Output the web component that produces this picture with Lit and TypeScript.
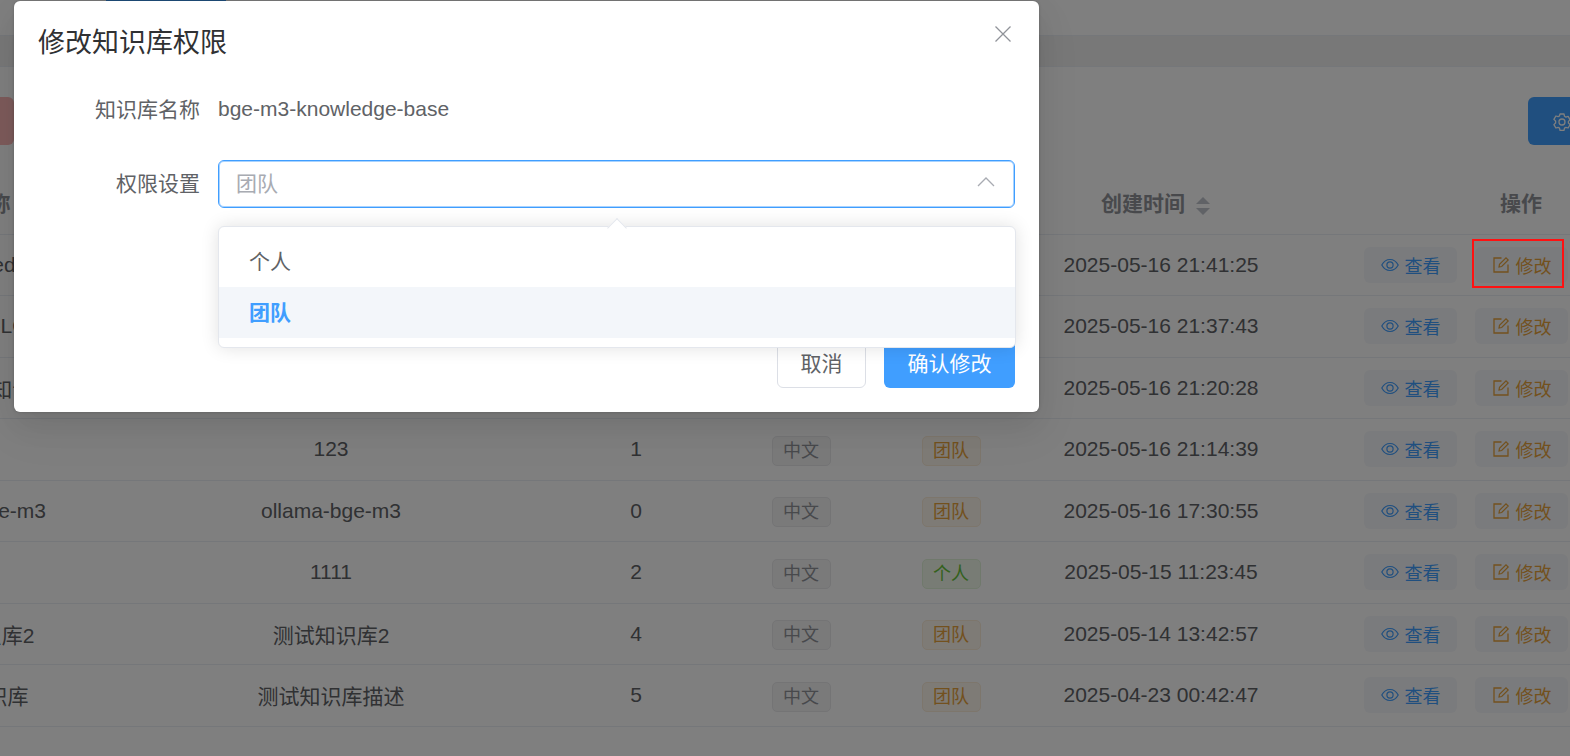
import { LitElement, html, css, svg } from "lit";
import { customElement } from "lit/decorators.js";

const rows = [
  { n: "bge-m3-knowledge-base", d: "", c: "", p: "", t: "2025-05-16 21:41:25" },
  { n: "Embeddings-LOCAL.", d: "", c: "", p: "", t: "2025-05-16 21:37:43" },
  { n: "产品说明书知识库2", d: "", c: "", p: "", t: "2025-05-16 21:20:28" },
  { n: "123", d: "123", c: "1", p: "团队", t: "2025-05-16 21:14:39" },
  { n: "ollama-bge-m3", d: "ollama-bge-m3", c: "0", p: "团队", t: "2025-05-16 17:30:55" },
  { n: "1111", d: "1111", c: "2", p: "个人", t: "2025-05-15 11:23:45" },
  { n: "测试知识库2", d: "测试知识库2", c: "4", p: "团队", t: "2025-05-14 13:42:57" },
  { n: "测试知识库", d: "测试知识库描述", c: "5", p: "团队", t: "2025-04-23 00:42:47" },
];

const eye = svg`<path d="M.8 9C2.800 5.300 5.700 3.500 9 3.500s6.200 1.800 8.200 5.500c-2 3.700-4.900 5.500-8.200 5.500S2.800 12.700.8 9z" fill="none" stroke="currentColor" stroke-width="1.200"/><circle cx="9" cy="9" r="3.100" fill="none" stroke="currentColor" stroke-width="1.200"/>`;
const edit = svg`<path d="M16 8.500V16H2V2h7.500" fill="none" stroke="currentColor" stroke-width="1.300"/><path d="M7 11l.5-2.700L14 1.800l2.200 2.200-6.500 6.500z" fill="none" stroke="currentColor" stroke-width="1.200"/>`;
const gear = svg`<path d="M7 1.200h4l.5 2.300 1.400.8 2.200-.7 2 3.400-1.700 1.600v1.600l1.700 1.600-2 3.400-2.200-.7-1.400.8-.5 2.300H7l-.5-2.300-1.400-.8-2.200.7-2-3.400 1.700-1.600V8.200L.900 6.600l2-3.400 2.200.7 1.400-.8z" transform="translate(0 -.2)" fill="none" stroke="currentColor" stroke-width="1.300" stroke-linejoin="round"/><circle cx="9" cy="9" r="3" fill="none" stroke="currentColor" stroke-width="1.300"/>`;

@customElement("app-root")
export class AppRoot extends LitElement {
  static styles = css`
    :host { display: block; width: 1570px; height: 756px; overflow: hidden; position: relative;
      font-family: "Liberation Sans", "Noto Sans CJK SC", sans-serif; background: #fff; color: #606266; }
    .top { height: 35px; border-bottom: 1px solid #ebeef5; position: relative; }
    .top i { display: block; position: absolute; left: 106px; top: 0; width: 120px; height: 2px; background: #409eff; }
    .band { height: 30px; background: #f0f0f0; border-bottom: 1px solid #ebeef5; }
    .bar { height: 114px; display: flex; justify-content: space-between; box-sizing: border-box; padding-top: 30px; }
    .del { width: 14px; height: 48px; background: #fab6b6; border-radius: 0 6px 6px 0; }
    .gear { width: 60px; height: 48px; margin-right: -18px; background: #409eff; border-radius: 6px 0 0 6px; color: #fff;
      box-sizing: border-box; padding: 16px 0 0 25px; }
    .gear svg { width: 18px; height: 18px; display: block; }
    .table { margin-left: -164px; width: 1910px; }
    .row { display: grid; grid-template-columns: 280px 430px 180px 150px 150px 270px 450px; height: 61.500px; border-bottom: 1px solid #ebeef5;
      box-sizing: border-box; font-size: 21px; align-items: center; color: #606266; }
    .head { height: 53.500px; padding-bottom: 10px; font-weight: 700; color: #909399; }
    .row > div { white-space: nowrap; }
    .c { text-align: center; }
    .sorter { display: inline-block; vertical-align: middle; width: 36px; box-sizing: border-box; padding-left: 11px; }
    .sorter b { display: block; width: 0; height: 0; border: 7px solid transparent; }
    .sorter b:first-child { border-top: 0; border-bottom: 7px solid #c0c4cc; margin-bottom: 4px; }
    .sorter b:last-child { border-bottom: 0; border-top: 7px solid #c0c4cc; }
    .tag { display: inline-block; box-sizing: border-box; height: 30px; line-height: 28px; padding: 0 10.500px; font-size: 18px; border-radius: 5px; border: 1px solid; }
    .cell-tag { padding-top: 3px; }
    .gray { color: #909399; background: #f4f4f5; border-color: #e9e9eb; }
    .orange { color: #e6a23c; background: #fdf6ec; border-color: #faecd8; }
    .green { color: #67c23a; background: #f0f9eb; border-color: #e1f3d8; }
    .ops { display: flex; gap: 18px; padding-left: 68px; }
    .op { display: inline-flex; align-items: center; gap: 6px; height: 36px; width: 93px; justify-content: center; box-sizing: border-box;
      font-size: 18px; border-radius: 6px; background: #f5f7fa; flex: none; }
    .op svg { width: 18px; height: 18px; }
    .blue { color: #409eff; }
    .warn { color: #e6a23c; }
    .mask { position: absolute; inset: 0; background: rgba(0,0,0,.5); }
    .mark { position: absolute; left: 1472px; top: 239px; width: 92px; height: 49px; border: 2px solid #f11; box-sizing: border-box; }
    .dialog { position: absolute; left: 14px; top: 1px; width: 1025px; height: 411px; background: #fff; border-radius: 6px; box-sizing: border-box;
      padding: 24px; box-shadow: 0 18px 48px 6px rgba(0,0,0,.04), 0 12px 30px rgba(0,0,0,.08), 0 0 3px rgba(0,0,0,.2); }
    .title { font-size: 27px; line-height: 36px; color: #303133; }
    .close { position: absolute; right: 27px; top: 24px; width: 18px; height: 18px; color: #909399; }
    .field { display: flex; align-items: center; font-size: 21px; }
    .lab { width: 162px; padding-right: 18px; text-align: right; color: #606266; }
    .val { padding-top: 2px; }
    .f1 { margin-top: 23px; height: 48px; }
    .f2 { margin-top: 28px; height: 48px; }
    .f2 .lab { padding-bottom: 4px; }
    .sel { width: 797px; height: 48px; box-sizing: border-box; border: 1px solid #409eff; box-shadow: inset 0 0 0 1px rgba(64,158,255,.45); border-radius: 6px;
      display: flex; align-items: center; justify-content: space-between; padding: 0 19px 4px 17px; color: #a8abb2; font-size: 21px; }
    .sel svg { width: 18px; height: 18px; display: block; }
    .foot { position: absolute; right: 24px; top: 338px; display: flex; gap: 18px; }
    .btn { height: 49px; box-sizing: border-box; border-radius: 6px; font-size: 21px; display: flex; align-items: center; justify-content: center; padding-bottom: 4px; }
    .cancel { width: 89px; border: 1px solid #dcdfe6; color: #606266; background: #fff; }
    .ok { width: 131px; background: #409eff; color: #fff; }
    .drop { position: absolute; left: 218px; top: 226px; width: 798px; height: 121.500px; background: #fff; border: 1px solid #e4e7ed; border-radius: 6px;
      box-sizing: border-box; padding-top: 10px; box-shadow: 0 0 18px rgba(0,0,0,.12); }
    .arrow { position: absolute; left: 391px; top: -6px; width: 14px; height: 14px; background: #fff; transform: rotate(45deg); border-left: 1px solid #e4e7ed; border-top: 1px solid #e4e7ed; box-sizing: border-box; }
    .opt { height: 50px; line-height: 50px; padding-left: 30px; font-size: 21px; color: #606266; position: relative; }
    .opt.on { background: #f3f6fa; color: #409eff; font-weight: 700; height: 51px; line-height: 52px; }
  `;

  render() {
    return html`
      <div class="top"><i></i></div>
      <div class="band"></div>
      <div class="bar"><div class="del"></div><div class="gear"><svg viewBox="0 0 18 18">${gear}</svg></div></div>
      <div class="table">
        <div class="row head">
          <div class="c">知识库名称<span class="sorter"><b></b><b></b></span></div><div class="c">描述</div><div class="c">文档数</div><div class="c">语言</div><div class="c">权限</div>
          <div class="c">创建时间<span class="sorter"><b></b><b></b></span></div>
          <div class="c">操作</div>
        </div>
        ${rows.map((r) => html`
          <div class="row">
            <div class="c">${r.n}</div>
            <div class="c">${r.d}</div>
            <div class="c">${r.c}</div>
            <div class="c cell-tag">${r.p ? html`<span class="tag gray">中文</span>` : ""}</div>
            <div class="c cell-tag">${r.p ? html`<span class="tag ${r.p === "个人" ? "green" : "orange"}">${r.p}</span>` : ""}</div>
            <div class="c">${r.t}</div>
            <div class="ops">
              <span class="op blue"><svg viewBox="0 0 18 18">${eye}</svg>查看</span>
              <span class="op warn"><svg viewBox="0 0 18 18">${edit}</svg>修改</span>
            </div>
          </div>`)}
      </div>
      <div class="mask"></div>
      <div class="mark"></div>
      <div class="dialog">
        <div class="title">修改知识库权限</div>
        <svg class="close" viewBox="0 0 18 18"><path d="M1.500 1.500l15 15M16.500 1.500l-15 15" stroke="currentColor" stroke-width="1.300" fill="none"/></svg>
        <div class="field f1"><div class="lab">知识库名称</div><div class="val">bge-m3-knowledge-base</div></div>
        <div class="field f2"><div class="lab">权限设置</div>
          <div class="sel"><span>团队</span><svg viewBox="0 0 18 18"><path d="M1 13l8-8 8 8" fill="none" stroke="#a8abb2" stroke-width="1.300"/></svg></div>
        </div>
        <div class="foot"><div class="btn cancel">取消</div><div class="btn ok">确认修改</div></div>
      </div>
      <div class="drop">
        <div class="arrow"></div>
        <div class="opt">个人</div>
        <div class="opt on">团队</div>
      </div>
    `;
  }
}
